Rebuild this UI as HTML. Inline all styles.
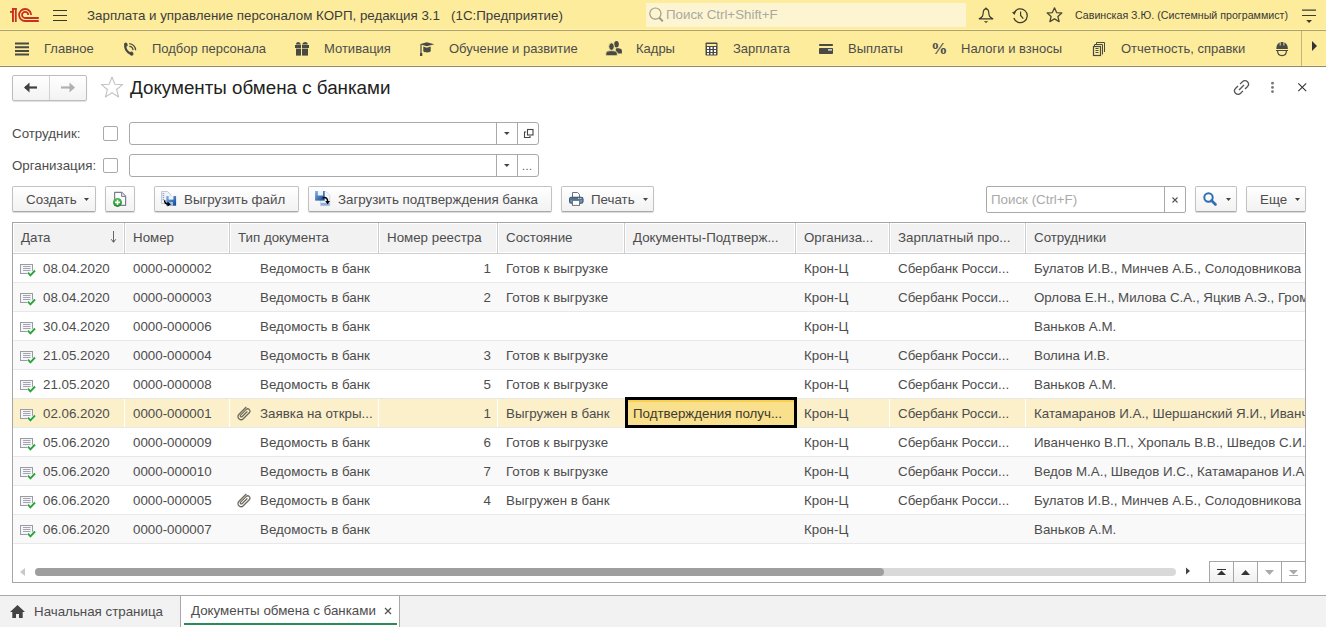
<!DOCTYPE html>
<html><head><meta charset="utf-8">
<style>
*{box-sizing:border-box;margin:0;padding:0}
html,body{width:1326px;height:627px;overflow:hidden;background:#fff;font-family:"Liberation Sans",sans-serif;font-size:13.33px;color:#4d4d4d}
.a{position:absolute;white-space:nowrap}
#top{position:absolute;left:0;top:0;width:1326px;height:31px;background:#FCEC9C;border-bottom:1px solid #B0A266;box-shadow:inset 0 -1px 0 #FDF1B5}
#sec{position:absolute;left:0;top:31px;width:1326px;height:36px;background:#FCEC9C;border-bottom:1px solid #958A62;box-shadow:inset 0 -1px 0 #FDF0B2}
.si{position:absolute;top:0;height:35px;line-height:35px;font-size:13px;color:#4d4d4d}
svg{position:absolute;overflow:visible}
.fld{left:129px;width:410px;height:23px;border:1px solid #a9a9a9;border-radius:3px;background:#fff}
.sep{position:absolute;top:0;width:1px;height:21px;background:#a9a9a9}
.btn{height:26px;border:1px solid #c2c2c2;border-bottom-color:#a8a8a8;border-radius:2px;background:linear-gradient(#fff,#f2f2f2);box-shadow:0 1px 1px rgba(0,0,0,.15)}
.hd{top:223px;height:30px;line-height:30px;color:#4d4d4d}
.hs{top:223px;width:3px;height:30px;background:#cdcdcd;border-left:1px solid #fff;border-right:1px solid #fff;margin-left:-1px}
.r{position:absolute;left:13px;width:1292px;height:29px;background:#fff;border-bottom:1px solid #e8e8e8}
.r.g{background:#f9f9f9}
.r.sel{background:#FBF0CA}
.c{position:absolute;top:1px;height:28px;line-height:28px;white-space:nowrap;color:#4d4d4d}
.selc{position:absolute;left:612px;top:-2px;width:172px;height:31px;border:3px solid #000;background:#F9E08C;box-shadow:inset 0 2px 0 #F7D050;line-height:27px;padding-left:5px;color:#3d3a30;white-space:nowrap}

</style></head><body>

<!-- TOP BAR -->
<div id="top">
  <svg style="left:0;top:0" width="45" height="30" viewBox="0 0 45 30">
    <g fill="#C9301F"><rect x="12" y="8" width="4.7" height="1.8"/><rect x="12" y="8" width="1.9" height="14"/><rect x="14.9" y="8" width="1.8" height="14"/><rect x="10" y="11" width="3.5" height="1.8"/></g>
    <g fill="none" stroke="#C9301F" stroke-width="1.8">
      <path d="M31.1 15 A6 6 0 1 0 25.3 21 H38.8"/>
      <path d="M28.2 15 A3.1 3.1 0 1 0 25.3 18 H38.8"/>
    </g>
  </svg>
  <svg style="left:53px;top:9px" width="15" height="13"><g stroke="#3a372c" stroke-width="1.1"><path d="M0 1.5H14M0 6.5H14M0 11.5H14"/></g></svg>
  <div class="a" style="left:87px;top:1px;height:30px;line-height:30px;font-size:13.33px;color:#3d3d3d">Зарплата и управление персоналом КОРП, редакция 3.1&nbsp;&nbsp; (1С:Предприятие)</div>
  <div class="a" style="left:646px;top:3px;width:320px;height:24px;background:#FDF5D2"></div>
  <svg style="left:646px;top:4px" width="20" height="20" viewBox="0 0 20 20"><circle cx="9.4" cy="9.6" r="5.6" fill="none" stroke="#9c9a86" stroke-width="1.2"/><path d="M13.3 13.8 L16.8 17.4" stroke="#9c9a86" stroke-width="2"/></svg>
  <div class="a" style="left:666px;top:3px;height:23px;line-height:23px;font-size:13.33px;color:#a9a9a0">Поиск Ctrl+Shift+F</div>
  <!-- bell -->
  <svg style="left:974px;top:4px" width="24" height="22" viewBox="0 0 24 22"><path d="M12 4.8 C9.8 4.8 9.3 6.5 9.2 9 C9 12 8.5 13 5.2 14.8 H18.8 C15.5 13 15 12 14.8 9 C14.7 6.5 14.2 4.8 12 4.8 Z" fill="none" stroke="#3e3b30" stroke-width="1.2" stroke-linejoin="round"/><circle cx="12" cy="4.5" r="0.9" fill="#3e3b30"/><path d="M9.8 17.2 H14.2 L12 19Z" fill="#3e3b30"/></svg>
  <!-- history -->
  <svg style="left:1008px;top:4px" width="22" height="22" viewBox="0 0 22 22"><path d="M6.2 8.6 A6.9 6.9 0 1 1 5.8 14" fill="none" stroke="#3e3b30" stroke-width="1.3"/><path d="M4 8.2 L8 7.2 L6.5 11 Z" fill="#3e3b30"/><path d="M12.6 7.5 V11.5 L15.3 14.6" fill="none" stroke="#3e3b30" stroke-width="1.2"/></svg>
  <!-- star -->
  <svg style="left:1046px;top:7px" width="17" height="16" viewBox="0 0 17 16"><path d="M8.5 0.8 L10.6 5.6 L15.8 6 L11.9 9.5 L13.1 14.6 L8.5 11.9 L3.9 14.6 L5.1 9.5 L1.2 6 L6.4 5.6 Z" fill="none" stroke="#4d4a3a" stroke-width="1.3" stroke-linejoin="round"/></svg>
  <div class="a" style="left:1075px;top:0;height:30px;line-height:30px;font-size:10.67px;color:#383838">Савинская З.Ю. (Системный программист)</div>
  <svg style="left:1302px;top:9px" width="15" height="15" viewBox="0 0 15 15"><path d="M0 1.1H14M0 6.5H14" stroke="#3e3b30" stroke-width="1.1"/><path d="M4.2 11 H10 L7.1 14Z" fill="#3e3b30"/></svg>
</div>

<!-- SECTION PANEL -->
<div id="sec">
  <svg style="left:15px;top:11px" width="14" height="14"><path d="M0 1.5H14M0 5.2H14M0 8.9H14M0 12.6H14" stroke="#4a4a44" stroke-width="2"/></svg>
  <div class="si" style="left:44px">Главное</div>
  <svg style="left:115px;top:5px" width="30" height="26" viewBox="0 0 30 26"><path d="M10.6 8.8 C9.4 11.8 11.6 15.6 16 18" fill="none" stroke="#4a4a44" stroke-width="2.4" stroke-linecap="round"/><ellipse cx="10.9" cy="8.6" rx="1.7" ry="2" transform="rotate(-40 10.9 8.6)" fill="#4a4a44"/><ellipse cx="16.6" cy="17.6" rx="1.8" ry="2.1" transform="rotate(-40 16.6 17.6)" fill="#4a4a44"/><path d="M14.2 7.6 A6.7 6.7 0 0 1 20.6 14.3" fill="none" stroke="#4a4a44" stroke-width="1.3"/><path d="M14.3 10.4 A3.9 3.9 0 0 1 18 14.1" fill="none" stroke="#4a4a44" stroke-width="1.3"/></svg>
  <div class="si" style="left:152px">Подбор персонала</div>
  <svg style="left:288px;top:5px" width="30" height="26" viewBox="0 0 30 26"><g fill="#4a4a44"><path d="M8 8.5 C8 5.4 11.5 5 13 8.5 Z"/><path d="M14 8.5 C15.5 5 19.8 5.4 19.8 8.5 Z"/><rect x="7" y="9" width="6" height="3"/><rect x="14" y="9" width="7" height="3"/><rect x="8" y="12.6" width="5" height="7"/><rect x="14" y="12.6" width="6" height="7"/></g></svg>
  <div class="si" style="left:324px">Мотивация</div>
  <svg style="left:418px;top:9px" width="18" height="18" viewBox="0 0 18 18"><path d="M1.7 4.2 L8.8 2.2 L16.3 4.2 L8.8 6.3 Z" fill="#4a4a44"/><path d="M5.3 6.6 V11.2 C6.5 12.8 11.5 12.8 12.7 11.2 V6.6 L8.8 7.8 Z" fill="#4a4a44"/><path d="M3 4.5 V13.5" stroke="#4a4a44" stroke-width="1.2"/><rect x="2" y="13" width="2.3" height="3" fill="#4a4a44"/></svg>
  <div class="si" style="left:449px">Обучение и развитие</div>
  <svg style="left:598px;top:5px" width="30" height="26" viewBox="0 0 30 26"><g fill="#4a4a44"><ellipse cx="18.5" cy="8.3" rx="2.3" ry="3.3"/><path d="M17.8 17.4 V12.6 C19 12.3 20.5 12.3 21.5 12.5 C23 12.8 23.9 13.5 23.9 14.5 V17.4 Z"/></g><g fill="#4a4a44" stroke="#FCEC9C" stroke-width="0.9"><ellipse cx="13.5" cy="10.6" rx="2.8" ry="3.8"/><path d="M7.8 19.8 V17 C7.8 15.4 10.5 14.6 13.5 14.6 C16.5 14.6 19.3 15.4 19.3 17 V19.8 Z"/></g></svg>
  <div class="si" style="left:636px">Кадры</div>
  <svg style="left:705px;top:11px" width="13" height="14" viewBox="0 0 13 14"><rect x="0.5" y="0.5" width="12" height="13" rx="1" fill="#4a4a44"/><rect x="1.8" y="2" width="9.5" height="2" fill="#FCEC9C"/><g fill="#fff"><rect x="2" y="5" width="2" height="2"/><rect x="5.5" y="5" width="2" height="2"/><rect x="9" y="5" width="2" height="2"/><rect x="2" y="8" width="2" height="2"/><rect x="5.5" y="8" width="2" height="2"/><rect x="9" y="8" width="2" height="2"/><rect x="2" y="11" width="2" height="1.5"/><rect x="5.5" y="11" width="2" height="1.5"/><rect x="9" y="11" width="2" height="1.5"/></g></svg>
  <div class="si" style="left:733px">Зарплата</div>
  <svg style="left:819px;top:13px" width="15" height="11" viewBox="0 0 15 11"><rect x="0" y="0" width="14" height="2" rx="0.8" fill="#4a4a44"/><rect x="0" y="4" width="14" height="6" rx="0.8" fill="#4a4a44"/><rect x="9" y="5.3" width="4" height="1.2" fill="#fff"/></svg>
  <div class="si" style="left:848px">Выплаты</div>
  <div class="si" style="left:931px;font-family:'Liberation Serif',serif;font-weight:bold;font-size:16.5px">%</div>
  <div class="si" style="left:961px">Налоги и взносы</div>
  <svg style="left:1092px;top:10px" width="15" height="16" viewBox="0 0 15 16"><rect x="1.5" y="5.5" width="7" height="9" fill="none" stroke="#4a4a44" stroke-width="1.2"/><path d="M3.5 7.5H6.5M3.5 9.5H6.5M3.5 11.5H6.5" stroke="#4a4a44" stroke-width="1"/><path d="M2.5 5 V3.5 H10.5 V13.5" fill="none" stroke="#4a4a44" stroke-width="1"/><path d="M4.5 3 V1.5 H12.5 V11" fill="none" stroke="#4a4a44" stroke-width="1"/></svg>
  <div class="si" style="left:1121px">Отчетность, справки</div>
  <svg style="left:1276px;top:11px" width="12" height="15" viewBox="0 0 12 15"><path d="M0.3 7 C0.3 2.5 2.8 0 6 0 C9.2 0 11.9 2.5 11.9 7 Z" fill="#4a4a44"/><path d="M4.2 0 V3.5 M7.9 0 V3.5" stroke="#FCEC9C" stroke-width="0.9"/><rect x="0" y="8" width="12" height="1" fill="#4a4a44"/><path d="M1.6 9 C1.6 12.3 3.5 13.6 6 13.6 C8.5 13.6 10.4 12.3 10.4 9" fill="none" stroke="#4a4a44" stroke-width="1.2"/></svg>
  <div class="a" style="left:1301px;top:0;width:1px;height:35px;background:#C4B57A"></div>
  <svg style="left:1312px;top:10px" width="6" height="11"><path d="M0 0 L5 5 L0 10Z" fill="#333"/></svg>
</div>

<!-- SVG defs -->
<svg width="0" height="0" style="position:absolute">
 <defs>
  <g id="docic">
   <rect x="0.5" y="0.5" width="12" height="9" fill="#f3f5fa" stroke="#9a9ca2" stroke-width="1"/>
   <path d="M3 2.5H10.5M3 4.5H10.5M3 6.5H10.5" stroke="#a4a6ac" stroke-width="1"/>
   <path d="M8 8.7 L10.4 11.3 L15 6.5" fill="none" stroke="#fff" stroke-width="3.2"/>
   <path d="M8 8.7 L10.4 11.3 L15 6.5" fill="none" stroke="#2aa33a" stroke-width="1.9"/>
  </g>
  <g id="clip"><path d="M14 5.3 L6.8 12.5 C5.5 13.8 5.8 16 7.2 17 C8.5 18 10.2 17.8 11.3 16.7 L17.3 10.7 C18.3 9.7 18.2 8.2 17.2 7.4 C16.3 6.6 15 6.7 14.1 7.6 L8.6 13.1 C8.0 13.7 8.2 14.6 8.9 14.9 C9.4 15.1 9.9 14.9 10.3 14.5 L15 9.8" fill="none" stroke="#6b675a" stroke-width="1.25" stroke-linecap="round" stroke-linejoin="round"/></g>
 </defs>
</svg>

<!-- FORM HEADER -->
<div class="a" style="left:12px;top:75px;width:75px;height:26px;border:1px solid #bcbcbc;border-radius:2px;background:linear-gradient(#fff,#f3f3f3);box-shadow:0 1px 1px rgba(0,0,0,.12)"></div>
<div class="a" style="left:49px;top:76px;width:1px;height:24px;background:#d2d2d2"></div>
<svg style="left:24px;top:82px" width="14" height="11" viewBox="0 0 14 11"><path d="M1 5.5 H13" stroke="#404040" stroke-width="2.2"/><path d="M0 5.5 L5.5 0.5 V10.5Z" fill="#404040"/></svg>
<svg style="left:61px;top:82px" width="14" height="11" viewBox="0 0 14 11"><path d="M0 5.5 H12" stroke="#b0b0b0" stroke-width="2.2"/><path d="M14 5.5 L8.5 0.5 V10.5Z" fill="#b0b0b0"/></svg>
<svg style="left:100px;top:76px" width="24" height="23" viewBox="0 0 24 23"><path d="M12 1 L14.9 8.2 L22.6 8.6 L16.6 13.5 L18.6 21 L12 16.8 L5.4 21 L7.4 13.5 L1.4 8.6 L9.1 8.2 Z" fill="none" stroke="#c4c4c4" stroke-width="1.1" stroke-linejoin="round"/></svg>
<div class="a" style="left:130px;top:75px;height:26px;line-height:26px;font-size:18.8px;color:#222">Документы обмена с банками</div>
<!-- link / more / close -->
<svg style="left:1232px;top:78px" width="19" height="19" viewBox="0 0 17 17"><g fill="none" stroke="#555" stroke-width="1.15"><path d="M7.2 5.5 L9.3 3.4 C10.6 2.1 12.6 2.1 13.8 3.3 C15 4.5 15 6.5 13.7 7.8 L11.6 9.9"/><path d="M9.8 11.5 L7.7 13.6 C6.4 14.9 4.4 14.9 3.2 13.7 C2 12.5 2 10.5 3.3 9.2 L5.4 7.1"/><path d="M6.3 10.7 L10.7 6.3"/></g></svg>
<svg style="left:1270px;top:81px" width="5" height="14"><circle cx="2.5" cy="2.2" r="1.4" fill="#777"/><circle cx="2.5" cy="6.4" r="1.4" fill="#777"/><circle cx="2.5" cy="10.6" r="1.4" fill="#777"/></svg>
<svg style="left:1298px;top:83px" width="9" height="9"><path d="M0.3 0.3 L8.2 8.2 M8.2 0.3 L0.3 8.2" stroke="#333" stroke-width="1.1"/></svg>

<!-- FILTERS -->
<div class="a" style="left:12px;top:122px;height:23px;line-height:23px;color:#4d4d4d">Сотрудник:</div>
<div class="a" style="left:103px;top:126px;width:15px;height:15px;border:1px solid #a9a9a9;border-radius:2px;background:#fff"></div>
<div class="a fld" style="top:122px"><div class="sep" style="left:366px"></div><div class="sep" style="left:387px"></div></div>
<svg style="left:504px;top:132px" width="6" height="3"><path d="M0 0H5.6L2.8 3Z" fill="#444"/></svg>
<svg style="left:524px;top:129px" width="10" height="10" viewBox="0 0 10 10"><rect x="3.5" y="0.5" width="5.5" height="5.5" fill="none" stroke="#444" stroke-width="1.1"/><path d="M2.2 3 H0.5 V8.5 H6 V7" fill="none" stroke="#444" stroke-width="1.1"/></svg>

<div class="a" style="left:12px;top:154px;height:23px;line-height:23px;color:#4d4d4d">Организация:</div>
<div class="a" style="left:103px;top:158px;width:15px;height:15px;border:1px solid #a9a9a9;border-radius:2px;background:#fff"></div>
<div class="a fld" style="top:154px"><div class="sep" style="left:366px"></div><div class="sep" style="left:387px"></div></div>
<svg style="left:504px;top:164px" width="6" height="3"><path d="M0 0H5.6L2.8 3Z" fill="#444"/></svg>
<div class="a" style="left:522px;top:160px;font-size:11px;color:#555;letter-spacing:0.5px">...</div>

<!-- COMMAND BAR -->
<div class="a btn" style="left:12px;top:186px;width:84px"></div>
<div class="a" style="left:26px;top:187px;height:25px;line-height:25px">Создать</div>
<svg style="left:84px;top:198px" width="5" height="3"><path d="M0 0H5L2.5 3Z" fill="#444"/></svg>
<div class="a btn" style="left:105px;top:186px;width:30px"></div>
<svg style="left:107px;top:188px" width="24" height="22" viewBox="0 0 24 22"><defs><linearGradient id="gd" x1="0" y1="0" x2="0" y2="1"><stop offset="0" stop-color="#4cbf4c"/><stop offset="1" stop-color="#1d8a2a"/></linearGradient></defs><path d="M7.6 4.4 H14.8 L18.6 8.2 V17.3 H7.6 Z" fill="#fbfcff" stroke="#7a7e8a" stroke-width="1.2" stroke-linejoin="round"/><path d="M14.6 4.6 V8.4 H18.4" fill="#e6e9f0" stroke="#7a7e8a" stroke-width="1"/><circle cx="10.5" cy="14.4" r="4.5" fill="url(#gd)"/><path d="M10.5 11.8 V17 M7.9 14.4 H13.1" stroke="#fff" stroke-width="1.6"/></svg>

<div class="a btn" style="left:154px;top:186px;width:145px"></div>
<svg style="left:156px;top:188px" width="24" height="22" viewBox="0 0 24 22"><defs><linearGradient id="fb" x1="0" y1="0" x2="1" y2="1"><stop offset="0" stop-color="#7fb6e8"/><stop offset="1" stop-color="#123f8c"/></linearGradient></defs><path d="M5.5 3.5 H11.5 L15 7 V15.5 H5.5 Z" fill="#f0f3f9" stroke="#b9c3d3" stroke-width="0.9"/><path d="M6.6 5.6H8.2M6.6 7.6H8.2M6.6 9.6H8.2M6.6 11.6H8.2" stroke="#8390a6" stroke-width="0.9"/><rect x="10.3" y="8" width="9.8" height="9.7" fill="url(#fb)"/><rect x="12.6" y="8" width="4.8" height="3.6" fill="#eef4fb"/><rect x="13" y="14" width="4" height="3.7" fill="#9ec0e6"/><path d="M8.6 12.3 C8.6 15 9.5 16.2 12.3 16.2" fill="none" stroke="#000" stroke-width="1.5"/><path d="M11.5 13.8 L15 16.2 L11.5 18.6 Z" fill="#000"/></svg>
<div class="a" style="left:184px;top:187px;height:25px;line-height:25px">Выгрузить файл</div>

<div class="a btn" style="left:308px;top:186px;width:244px"></div>
<svg style="left:310px;top:188px" width="24" height="22" viewBox="0 0 24 22"><defs><linearGradient id="fb2" x1="0" y1="0" x2="1" y2="1"><stop offset="0" stop-color="#7fb6e8"/><stop offset="1" stop-color="#123f8c"/></linearGradient></defs><path d="M10.5 3.5 H16 L19.8 7.3 V17.6 H10.5 Z" fill="#f2f5fa" stroke="#c9d2de" stroke-width="0.8"/><rect x="10.8" y="14.8" width="8.8" height="2.8" fill="#8eb0d8"/><rect x="5.1" y="3" width="9.6" height="9.6" fill="url(#fb2)"/><rect x="7.8" y="3" width="5.2" height="4.5" fill="#eef4fb"/><path d="M12.6 10 C15.8 8.5 17.8 10.5 17.6 13.5" fill="none" stroke="#000" stroke-width="1.5"/><path d="M15.2 13 H20 L17.6 16.3 Z" fill="#000"/></svg>
<div class="a" style="left:338px;top:187px;height:25px;line-height:25px">Загрузить подтверждения банка</div>

<div class="a btn" style="left:561px;top:186px;width:93px"></div>
<svg style="left:564px;top:188px" width="24" height="22" viewBox="0 0 24 22"><path d="M8.5 4.5 H13.5 L15.5 6.5 V9.5 H8.5 Z" fill="#fff" stroke="#6c7380" stroke-width="1"/><rect x="5.6" y="9.3" width="13.4" height="6" rx="1.8" fill="#6e92b8" stroke="#34506e" stroke-width="1.1"/><path d="M6.5 11 H18" stroke="#34506e" stroke-width="0.9"/><rect x="8.5" y="12.4" width="7" height="5" fill="#fff" stroke="#6c7380" stroke-width="1"/><circle cx="14.8" cy="10.3" r="0.6" fill="#fff"/><circle cx="16.8" cy="10.3" r="0.6" fill="#fff"/></svg>
<div class="a" style="left:591px;top:187px;height:25px;line-height:25px">Печать</div>
<svg style="left:643px;top:198px" width="5" height="3"><path d="M0 0H5L2.5 3Z" fill="#444"/></svg>

<!-- search field -->
<div class="a" style="left:986px;top:186px;width:200px;height:27px;border:1px solid #a9a9a9;border-radius:2px;background:#fff"></div>
<div class="a" style="left:1164px;top:187px;width:1px;height:25px;background:#a9a9a9"></div>
<div class="a" style="left:991px;top:186px;height:27px;line-height:27px;color:#aaa">Поиск (Ctrl+F)</div>
<svg style="left:1172px;top:197px" width="6" height="6"><path d="M0.5 0.5L5.5 5.5M5.5 0.5L0.5 5.5" stroke="#555" stroke-width="1.1"/></svg>
<div class="a btn" style="left:1195px;top:186px;width:42px"></div>
<svg style="left:1203px;top:192px" width="14" height="14" viewBox="0 0 14 14"><circle cx="5.5" cy="5.5" r="4.2" fill="none" stroke="#2e6fb0" stroke-width="2"/><path d="M8.5 8.5 L12.5 12.5" stroke="#2e6fb0" stroke-width="2.6" stroke-linecap="round"/></svg>
<svg style="left:1226px;top:198px" width="5" height="3"><path d="M0 0H5L2.5 3Z" fill="#444"/></svg>
<div class="a btn" style="left:1246px;top:186px;width:60px"></div>
<div class="a" style="left:1260px;top:187px;height:25px;line-height:25px">Еще</div>
<svg style="left:1295px;top:198px" width="5" height="3"><path d="M0 0H5L2.5 3Z" fill="#444"/></svg>

<!-- TABLE -->
<div class="a" style="left:12px;top:222px;width:1294px;height:361px;border:1px solid #a6a6a6;background:#fff"></div>
<div class="a" style="left:13px;top:223px;width:1292px;height:31px;background:#f2f2f2;border-bottom:1px solid #cdcdcd;box-shadow:inset 1px 1px 0 #fff,inset -1px -1px 0 #fff"></div>
<div class="a hd" style="left:21px">Дата</div>
<svg style="left:111px;top:231px" width="6" height="13" viewBox="0 0 6 13"><path d="M2.5 0 V11" stroke="#666" stroke-width="1"/><path d="M0.3 8.3 L2.5 11.3 L4.7 8.3" fill="none" stroke="#555" stroke-width="1"/></svg>
<div class="a hd" style="left:133px">Номер</div>
<div class="a hd" style="left:238px">Тип документа</div>
<div class="a hd" style="left:387px">Номер реестра</div>
<div class="a hd" style="left:506px">Состояние</div>
<div class="a hd" style="left:633px">Документы-Подтверж...</div>
<div class="a hd" style="left:804px">Организа...</div>
<div class="a hd" style="left:898px">Зарплатный про...</div>
<div class="a hd" style="left:1034px">Сотрудники</div>
<div class="a hs" style="left:124px"></div>
<div class="a hs" style="left:229px"></div>
<div class="a hs" style="left:378px"></div>
<div class="a hs" style="left:497px"></div>
<div class="a hs" style="left:624px"></div>
<div class="a hs" style="left:795px"></div>
<div class="a hs" style="left:889px"></div>
<div class="a hs" style="left:1025px"></div>

<div class="r" style="top:254px"><svg style="left:7px;top:10px" width="16" height="13" viewBox="0 0 16 13"><use href="#docic"/></svg><div class="c" style="left:30px">08.04.2020</div><div class="c" style="left:120px">0000-000002</div><div class="c" style="left:247px">Ведомость в банк</div><div class="c" style="left:378px;width:100px;text-align:right">1</div><div class="c" style="left:493px">Готов к выгрузке</div><div class="c" style="left:791px">Крон-Ц</div><div class="c" style="left:885px">Сбербанк Росси...</div><div class="c" style="left:1021px;width:271px;overflow:hidden">Булатов И.В., Минчев А.Б., Солодовникова</div></div>
<div class="r g" style="top:283px"><svg style="left:7px;top:10px" width="16" height="13" viewBox="0 0 16 13"><use href="#docic"/></svg><div class="c" style="left:30px">08.04.2020</div><div class="c" style="left:120px">0000-000003</div><div class="c" style="left:247px">Ведомость в банк</div><div class="c" style="left:378px;width:100px;text-align:right">2</div><div class="c" style="left:493px">Готов к выгрузке</div><div class="c" style="left:791px">Крон-Ц</div><div class="c" style="left:885px">Сбербанк Росси...</div><div class="c" style="left:1021px;width:271px;overflow:hidden">Орлова Е.Н., Милова С.А., Яцкив А.Э., Громова</div></div>
<div class="r" style="top:312px"><svg style="left:7px;top:10px" width="16" height="13" viewBox="0 0 16 13"><use href="#docic"/></svg><div class="c" style="left:30px">30.04.2020</div><div class="c" style="left:120px">0000-000006</div><div class="c" style="left:247px">Ведомость в банк</div><div class="c" style="left:493px"></div><div class="c" style="left:791px">Крон-Ц</div><div class="c" style="left:885px"></div><div class="c" style="left:1021px;width:271px;overflow:hidden">Ваньков А.М.</div></div>
<div class="r g" style="top:341px"><svg style="left:7px;top:10px" width="16" height="13" viewBox="0 0 16 13"><use href="#docic"/></svg><div class="c" style="left:30px">21.05.2020</div><div class="c" style="left:120px">0000-000004</div><div class="c" style="left:247px">Ведомость в банк</div><div class="c" style="left:378px;width:100px;text-align:right">3</div><div class="c" style="left:493px">Готов к выгрузке</div><div class="c" style="left:791px">Крон-Ц</div><div class="c" style="left:885px">Сбербанк Росси...</div><div class="c" style="left:1021px;width:271px;overflow:hidden">Волина И.В.</div></div>
<div class="r" style="top:370px"><svg style="left:7px;top:10px" width="16" height="13" viewBox="0 0 16 13"><use href="#docic"/></svg><div class="c" style="left:30px">21.05.2020</div><div class="c" style="left:120px">0000-000008</div><div class="c" style="left:247px">Ведомость в банк</div><div class="c" style="left:378px;width:100px;text-align:right">5</div><div class="c" style="left:493px">Готов к выгрузке</div><div class="c" style="left:791px">Крон-Ц</div><div class="c" style="left:885px">Сбербанк Росси...</div><div class="c" style="left:1021px;width:271px;overflow:hidden">Ваньков А.М.</div></div>
<div class="r g sel" style="top:399px"><div style="position:absolute;left:111px;top:0;width:1px;height:28px;background:#fff"></div><div style="position:absolute;left:216px;top:0;width:1px;height:28px;background:#fff"></div><div style="position:absolute;left:365px;top:0;width:1px;height:28px;background:#fff"></div><div style="position:absolute;left:484px;top:0;width:1px;height:28px;background:#fff"></div><div style="position:absolute;left:782px;top:0;width:1px;height:28px;background:#fff"></div><div style="position:absolute;left:876px;top:0;width:1px;height:28px;background:#fff"></div><div style="position:absolute;left:1012px;top:0;width:1px;height:28px;background:#fff"></div><svg style="left:7px;top:10px" width="16" height="13" viewBox="0 0 16 13"><use href="#docic"/></svg><div class="c" style="left:30px">02.06.2020</div><div class="c" style="left:120px">0000-000001</div><svg style="left:219px;top:3px" width="24" height="22" viewBox="0 0 24 22"><use href="#clip"/></svg><div class="c" style="left:247px">Заявка на откры...</div><div class="c" style="left:378px;width:100px;text-align:right">1</div><div class="c" style="left:493px">Выгружен в банк</div><div class="selc">Подтверждения получ...</div><div class="c" style="left:791px">Крон-Ц</div><div class="c" style="left:885px">Сбербанк Росси...</div><div class="c" style="left:1021px;width:271px;overflow:hidden">Катамаранов И.А., Шершанский Я.И., Иванченко</div></div>
<div class="r" style="top:428px"><svg style="left:7px;top:10px" width="16" height="13" viewBox="0 0 16 13"><use href="#docic"/></svg><div class="c" style="left:30px">05.06.2020</div><div class="c" style="left:120px">0000-000009</div><div class="c" style="left:247px">Ведомость в банк</div><div class="c" style="left:378px;width:100px;text-align:right">6</div><div class="c" style="left:493px">Готов к выгрузке</div><div class="c" style="left:791px">Крон-Ц</div><div class="c" style="left:885px">Сбербанк Росси...</div><div class="c" style="left:1021px;width:271px;overflow:hidden">Иванченко В.П., Хропаль В.В., Шведов С.И., Ведов</div></div>
<div class="r g" style="top:457px"><svg style="left:7px;top:10px" width="16" height="13" viewBox="0 0 16 13"><use href="#docic"/></svg><div class="c" style="left:30px">05.06.2020</div><div class="c" style="left:120px">0000-000010</div><div class="c" style="left:247px">Ведомость в банк</div><div class="c" style="left:378px;width:100px;text-align:right">7</div><div class="c" style="left:493px">Готов к выгрузке</div><div class="c" style="left:791px">Крон-Ц</div><div class="c" style="left:885px">Сбербанк Росси...</div><div class="c" style="left:1021px;width:271px;overflow:hidden">Ведов М.А., Шведов И.С., Катамаранов И.А., Ив</div></div>
<div class="r" style="top:486px"><svg style="left:7px;top:10px" width="16" height="13" viewBox="0 0 16 13"><use href="#docic"/></svg><div class="c" style="left:30px">06.06.2020</div><div class="c" style="left:120px">0000-000005</div><svg style="left:219px;top:3px" width="24" height="22" viewBox="0 0 24 22"><use href="#clip"/></svg><div class="c" style="left:247px">Ведомость в банк</div><div class="c" style="left:378px;width:100px;text-align:right">4</div><div class="c" style="left:493px">Выгружен в банк</div><div class="c" style="left:791px">Крон-Ц</div><div class="c" style="left:885px">Сбербанк Росси...</div><div class="c" style="left:1021px;width:271px;overflow:hidden">Булатов И.В., Минчев А.Б., Солодовникова И.Р.</div></div>
<div class="r g" style="top:515px"><svg style="left:7px;top:10px" width="16" height="13" viewBox="0 0 16 13"><use href="#docic"/></svg><div class="c" style="left:30px">06.06.2020</div><div class="c" style="left:120px">0000-000007</div><div class="c" style="left:247px">Ведомость в банк</div><div class="c" style="left:493px"></div><div class="c" style="left:791px">Крон-Ц</div><div class="c" style="left:885px"></div><div class="c" style="left:1021px;width:271px;overflow:hidden">Ваньков А.М.</div></div>
<!-- scrollbar -->
<svg style="left:20px;top:568px" width="5" height="8"><path d="M5 0V8L0 4Z" fill="#c8c8c8"/></svg>
<div class="a" style="left:35px;top:568px;width:1141px;height:8px;border-radius:4px;background:#d9d9d9"></div>
<div class="a" style="left:35px;top:568px;width:849px;height:8px;border-radius:4px;background:#9e9e9e"></div>
<svg style="left:1186px;top:567px" width="4" height="8"><path d="M0 0.5V7.5L4 4Z" fill="#444"/></svg>
<div class="a" style="left:1209px;top:561px;width:96px;height:21px;border-top:1px solid #a6a6a6;border-left:1px solid #a6a6a6;background:#fff"></div>
<div class="a" style="left:1210px;top:562px;width:23px;height:20px;background:linear-gradient(#fff,#f0f0f0)"></div>
<div class="a" style="left:1234px;top:562px;width:23px;height:20px;background:linear-gradient(#fff,#f0f0f0)"></div>
<div class="a" style="left:1233px;top:562px;width:1px;height:20px;background:#a6a6a6"></div>
<div class="a" style="left:1257px;top:562px;width:1px;height:20px;background:#a6a6a6"></div>
<div class="a" style="left:1281px;top:562px;width:1px;height:20px;background:#a6a6a6"></div>
<svg style="left:1217px;top:569px" width="9" height="7"><path d="M0 0.5H9" stroke="#333" stroke-width="1"/><path d="M0 6 L4.5 1.5 L9 6Z" fill="#333"/></svg>
<svg style="left:1241px;top:570px" width="9" height="5"><path d="M0 5 L4.5 0 L9 5Z" fill="#333"/></svg>
<svg style="left:1265px;top:570px" width="9" height="5"><path d="M0 0 L4.5 5 L9 0Z" fill="#aaa"/></svg>
<svg style="left:1289px;top:570px" width="9" height="6"><path d="M0 0 L4.5 4.5 L9 0Z" fill="#aaa"/><path d="M0 5.5H9" stroke="#aaa" stroke-width="1"/></svg>

<!-- BOTTOM TABS -->
<div class="a" style="left:0;top:595px;width:1326px;height:32px;background:#f2f2f2;border-top:1px solid #a8a8a8"></div>
<svg style="left:10px;top:605px" width="15" height="13" viewBox="0 0 15 13"><path d="M7.5 0 L15 7 H12.7 V13 H9 V9 H6 V13 H2.3 V7 H0 Z" fill="#444"/></svg>
<div class="a" style="left:34px;top:596px;height:31px;line-height:31px;color:#4d4d4d">Начальная страница</div>
<div class="a" style="left:180px;top:596px;width:220px;height:31px;background:#fff;border-left:1px solid #a8a8a8;border-right:1px solid #a8a8a8"></div>
<div class="a" style="left:191px;top:595px;height:31px;line-height:31px;color:#4d4d4d">Документы обмена с банками</div>
<svg style="left:384px;top:607px" width="8" height="8"><path d="M1 1L7 7M7 1L1 7" stroke="#555" stroke-width="1.3"/></svg>
<div class="a" style="left:184px;top:623px;width:213px;height:2px;background:#2b8a56"></div>

</body></html>
